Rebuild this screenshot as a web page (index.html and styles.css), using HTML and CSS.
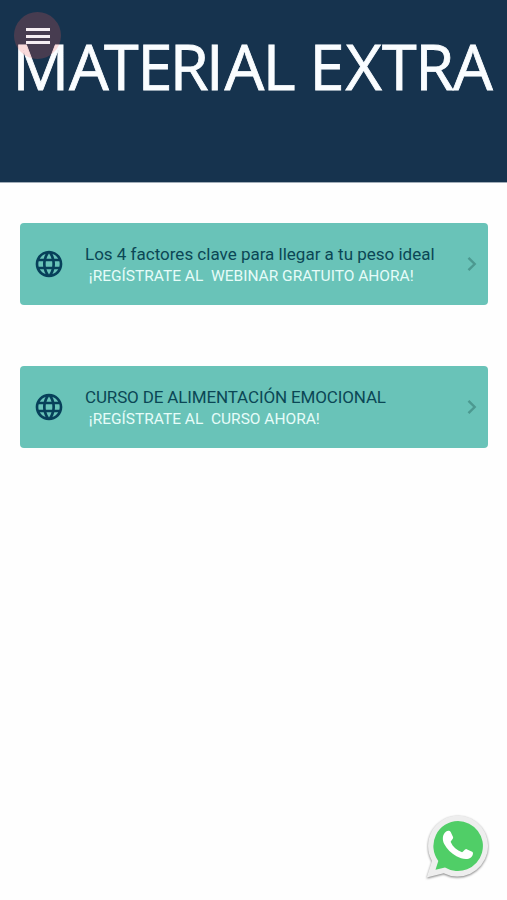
FILE: index.html
```html
<!DOCTYPE html>
<html lang="es">
<head>
<meta charset="utf-8">
<title>Material extra</title>
<link rel="stylesheet" href="styles.css">
</head>
<body>
<header class="hero">
  <svg class="hero-title" width="507" height="120" viewBox="0 0 507 120" role="heading" aria-level="1">
    <text y="80" x="12.500 69 104 137.500 169.800 206 224.500 262.800 292 309.500 345.500 382 415.200 453">MATERIAL EXTRA</text>
  </svg>
  <button class="menu" aria-label="Menú"><span></span><span></span><span></span></button>
</header>
<main class="list">
  <a class="card">
    <svg class="globe" viewBox="0 0 24 24"><path d="M11.99 2C6.47 2 2 6.48 2 12s4.47 10 9.99 10C17.52 22 22 17.52 22 12S17.52 2 11.99 2zm6.93 6h-2.95c-.32-1.25-.78-2.45-1.38-3.56 1.84.63 3.37 1.91 4.33 3.56zM12 4.04c.83 1.2 1.48 2.53 1.91 3.96h-3.82c.43-1.43 1.08-2.76 1.91-3.96zM4.26 14C4.1 13.36 4 12.69 4 12s.1-1.36.26-2h3.38c-.08.66-.14 1.32-.14 2s.06 1.34.14 2H4.26zm.82 2h2.95c.32 1.25.78 2.45 1.38 3.56-1.84-.63-3.37-1.9-4.33-3.56zm2.95-8H5.08c.96-1.66 2.49-2.93 4.33-3.56C8.81 5.55 8.35 6.75 8.03 8zM12 19.96c-.83-1.2-1.48-2.53-1.91-3.96h3.82c-.43 1.43-1.08 2.76-1.91 3.96zM14.34 14H9.66c-.09-.66-.16-1.32-.16-2s.07-1.35.16-2h4.68c.09.65.16 1.32.16 2s-.07 1.34-.16 2zm.25 5.56c.6-1.11 1.06-2.31 1.38-3.56h2.95c-.96 1.65-2.49 2.93-4.33 3.56zM16.36 14c.08-.66.14-1.32.14-2s-.06-1.34-.14-2h3.38c.16.64.26 1.31.26 2s-.1 1.36-.26 2h-3.38z"/></svg>
    <div class="texts">
      <div class="title">Los 4 factores clave para llegar a tu peso ideal</div>
      <div class="sub"> ¡REGÍSTRATE AL  WEBINAR GRATUITO AHORA!</div>
    </div>
    <svg class="chevron" viewBox="0 0 10 16"><path d="M1.500 1.800 7.700 8l-6.200 6.200"/></svg>
  </a>
  <a class="card">
    <svg class="globe" viewBox="0 0 24 24"><path d="M11.99 2C6.47 2 2 6.48 2 12s4.47 10 9.99 10C17.52 22 22 17.52 22 12S17.52 2 11.99 2zm6.93 6h-2.95c-.32-1.25-.78-2.45-1.38-3.56 1.84.63 3.37 1.91 4.33 3.56zM12 4.04c.83 1.2 1.48 2.53 1.91 3.96h-3.82c.43-1.43 1.08-2.76 1.91-3.96zM4.26 14C4.1 13.36 4 12.69 4 12s.1-1.36.26-2h3.38c-.08.66-.14 1.32-.14 2s.06 1.34.14 2H4.26zm.82 2h2.95c.32 1.25.78 2.45 1.38 3.56-1.84-.63-3.37-1.9-4.33-3.56zm2.95-8H5.08c.96-1.66 2.49-2.93 4.33-3.56C8.81 5.55 8.35 6.75 8.03 8zM12 19.96c-.83-1.2-1.48-2.53-1.91-3.96h3.82c-.43 1.43-1.08 2.76-1.91 3.96zM14.34 14H9.66c-.09-.66-.16-1.32-.16-2s.07-1.35.16-2h4.68c.09.65.16 1.32.16 2s-.07 1.34-.16 2zm.25 5.56c.6-1.11 1.06-2.31 1.38-3.56h2.95c-.96 1.65-2.49 2.93-4.33 3.56zM16.36 14c.08-.66.14-1.32.14-2s-.06-1.34-.14-2h3.38c.16.64.26 1.31.26 2s-.1 1.36-.26 2h-3.38z"/></svg>
    <div class="texts">
      <div class="title caps">CURSO DE ALIMENTACIÓN EMOCIONAL</div>
      <div class="sub"> ¡REGÍSTRATE AL  CURSO AHORA!</div>
    </div>
    <svg class="chevron" viewBox="0 0 10 16"><path d="M1.500 1.800 7.700 8l-6.200 6.200"/></svg>
  </a>
</main>
<a class="whatsapp" aria-label="WhatsApp">
  <svg width="70" height="72" viewBox="0 0 70 72">
    <path class="bubble" d="M37.500 6.500a30.500 30.500 0 1 1-13.800 57.700L6.700 68.500 12 52A30.500 30.500 0 0 1 37.500 6.500z"/>
    <path class="green" d="M38 12a25 25 0 1 1-13 46.400L15.500 60.800 18.300 51.900A25 25 0 0 1 38 12z"/>
    <path class="phone" transform="translate(1.500 1.300) scale(.93 .91)" d="M26.500 23.200c1.400-1.100 4.100-1 4.900.6l2.500 5.600c.7 1.800-2.200 3.900-2.500 5.300 2.200 5.400 6.700 9.200 12.200 11.300 1.600-.2 2.900-3.900 4.900-3.300l6 2.900c1.900 1.100.4 5-1.400 6.300-4.200 3.100-10.500 1.300-15.500-1.400-5.700-3.100-10.200-7.900-13-13.100-2.400-4.700-2.500-10.800 1.900-14.200z"/>
  </svg>
</a>
</body>
</html>
```

FILE: styles.css
```css
* { box-sizing: border-box; }
body {
  margin: 0;
  height: 900px;
  overflow: hidden;
  position: relative;
  background: #fefefe;
  font-family: Roboto, sans-serif;
}
.hero {
  position: relative;
  height: 182px;
  padding-top: 10px;
  background: #16334e;
  box-shadow: 0 1px 0 #a1adb8;
}
.hero-title { display: block; }
.hero-title text {
  fill: #fafdff;
  stroke: #fafdff;
  stroke-width: .8px;
  font-family: "Open Sans", sans-serif;
  font-size: 63px;
}
.menu {
  position: absolute;
  left: 14px;
  top: 12px;
  width: 47px;
  height: 47px;
  padding: 1px 0 0;
  border: 0;
  border-radius: 50%;
  background: rgba(244, 97, 91, .22);
  display: flex;
  flex-direction: column;
  align-items: center;
  justify-content: center;
  gap: 3.500px;
}
.menu span { width: 24px; height: 3px; background: #f5edf2; }
.list {
  display: flex;
  flex-direction: column;
  gap: 61px;
  padding: 40.600px 19px 0 20px;
}
.card {
  height: 82px;
  display: flex;
  align-items: center;
  border-radius: 4px;
  padding: 0 10.600px 0 12.500px;
  background: #69c3b8;
}
.globe { width: 32px; height: 32px; fill: #07405a; flex: none; }
.texts { flex: 1; padding: 3px 0 0 20.500px; }
.title, .sub { white-space: pre; }
.title { color: #0b4755; font-size: 17px; line-height: 21px; }
.caps { letter-spacing: -.14px; }
.sub { color: #e6fcf8; font-size: 15.500px; line-height: 22px; }
.chevron {
  width: 10px;
  height: 16px;
  fill: none;
  stroke: #4c9990;
  stroke-width: 2.400;
  flex: none;
}
.whatsapp { position: absolute; left: 420px; top: 809px; }
.whatsapp svg { display: block; }
.bubble { fill: #eee; filter: drop-shadow(.5px 1.500px 1px rgba(0, 0, 0, .5)); }
.green { fill: #50ce67; }
.phone { fill: #fff; }
```
